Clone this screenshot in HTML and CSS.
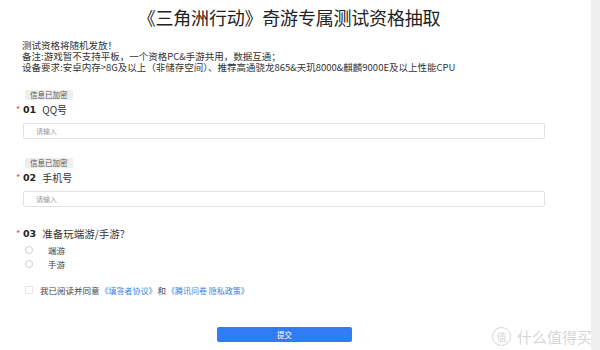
FILE: index.html
```html
<!DOCTYPE html>
<html lang="zh-CN">
<head>
    <meta charset="UTF-8">
    <title>《三角洲行动》奇游专属测试资格抽取</title>
    <link rel="stylesheet" href="styles.css">
</head>
<body>
    <div class="page">
        <div class="survey">
            <h1 class="title">《三角洲行动》奇游专属测试资格抽取</h1>
            <div class="intro">
                <p>测试资格将随机发放！</p>
                <p>备注:游戏暂不支持平板，一个资格PC&amp;手游共用，数据互通；</p>
                <p>设备要求:安卓内存&gt;8G及以上（非储存空间）、推荐高通骁龙865&amp;天玑8000&amp;麒麟9000E及以上性能CPU</p>
            </div>

            <div class="question first">
                <span class="badge">信息已加密</span>
                <div class="label"><span class="req">*</span><b>01</b>QQ号</div>
                <div class="input">请输入</div>
            </div>

            <div class="question">
                <span class="badge">信息已加密</span>
                <div class="label"><span class="req">*</span><b>02</b>手机号</div>
                <div class="input">请输入</div>
            </div>

            <div class="question choice">
                <div class="label"><span class="req">*</span><b>03</b>准备玩端游/手游?</div>
                <div class="option"><span class="radio"></span>端游</div>
                <div class="option"><span class="radio"></span>手游</div>
            </div>

            <div class="agree">
                <span class="check"></span>我已阅读并同意<a>《填答者协议》</a>和<a>《腾讯问卷 隐私政策》</a>
            </div>

            <div class="actions">
                <button class="submit">提交</button>
            </div>
        </div>
        <div class="scrollbar"></div>
        <div class="watermark"><span class="logo">值</span>什么值得买</div>
    </div>
</body>
</html>
```

FILE: styles.css
```css
body {
    margin: 0;
    background: #fff;
    font-family: "Noto Sans CJK SC", "Noto Sans", sans-serif;
    color: #222;
}
.page {
    position: relative;
    display: flex;
    height: 350px;
    overflow: hidden;
}
.survey {
    display: flex;
    flex-direction: column;
    align-items: flex-start;
    width: 591px;
    padding: 0 0 0 23px;
    box-sizing: border-box;
    font-size: 8px;
}
.scrollbar {
    width: 9px;
    background: #f0f0f0;
}
.title {
    align-self: stretch;
    margin: 6px 0 0 0;
    padding-right: 36px;
    font-size: 18px;
    line-height: 22px;
    font-weight: 400;
    text-align: center;
    color: #222;
    letter-spacing: -0.2px;
}
.intro {
    margin-top: 12px;
    margin-left: -1px;
    font-size: 9.5px;
    line-height: 11px;
    color: #333;
}
.intro p {
    margin: 0;
    height: 11px;
    white-space: nowrap;
}
.question {
    display: flex;
    flex-direction: column;
    align-items: flex-start;
    margin-top: 19px;
}
.question.first {
    margin-top: 17px;
}
.badge {
    margin-left: 2px;
    padding: 0 5px;
    height: 10px;
    line-height: 10px;
    font-size: 7.5px;
    color: #555;
    background: #eeeeee;
    border-radius: 1px;
}
.label {
    display: flex;
    align-items: center;
    margin-top: 2px;
    margin-left: -7px;
    height: 14px;
    font-size: 10px;
    color: #333;
}
.label b {
    margin-right: 6px;
    font-family: "DejaVu Sans", sans-serif;
    font-size: 9.5px;
    font-weight: 700;
    color: #222;
}
.req {
    width: 7px;
    color: #e5484d;
    font-size: 9px;
}
.input {
    margin-top: 7px;
    width: 522px;
    height: 16px;
    box-sizing: border-box;
    padding-left: 12px;
    border: 1px solid #e2e2e2;
    border-radius: 2px;
    font-size: 7px;
    line-height: 14px;
    color: #999;
}
.choice {
    margin-top: 17px;
}
.choice .label {
    font-size: 10.5px;
}
.option {
    display: flex;
    align-items: center;
    margin-top: 2px;
    padding-left: 2px;
    height: 12px;
    font-size: 8.5px;
    color: #444;
}
.choice .label + .option {
    margin-top: 4px;
}
.radio {
    width: 6px;
    height: 6px;
    margin-right: 15px;
    border: 1px solid #cfcfcf;
    border-radius: 50%;
}
.agree {
    display: flex;
    align-items: center;
    margin-top: 14px;
    height: 12px;
    font-size: 8.5px;
    color: #444;
}
.check {
    width: 6px;
    height: 6px;
    margin-right: 7px;
    margin-left: 2px;
    border: 1px solid #e6e6e6;
    border-radius: 1px;
}
.agree a {
    color: #3d7fe6;
    margin: 0 1px;
    font-size: 8px;
}
.actions {
    display: flex;
    margin-top: 31px;
    padding-left: 194px;
}
.submit {
    width: 135px;
    height: 15px;
    padding: 0;
    border: none;
    border-radius: 2px;
    background: #2f7cf6;
    color: #fff;
    font-family: inherit;
    font-size: 7.5px;
    line-height: 15px;
}
.watermark {
    position: absolute;
    right: 8px;
    bottom: 3px;
    display: flex;
    align-items: center;
    font-size: 15px;
    color: #d6d6d6;
}
.logo {
    width: 17px;
    height: 17px;
    margin-right: 6px;
    border: 1.5px solid #d6d6d6;
    border-radius: 50%;
    font-size: 10px;
    line-height: 17px;
    text-align: center;
}
```
